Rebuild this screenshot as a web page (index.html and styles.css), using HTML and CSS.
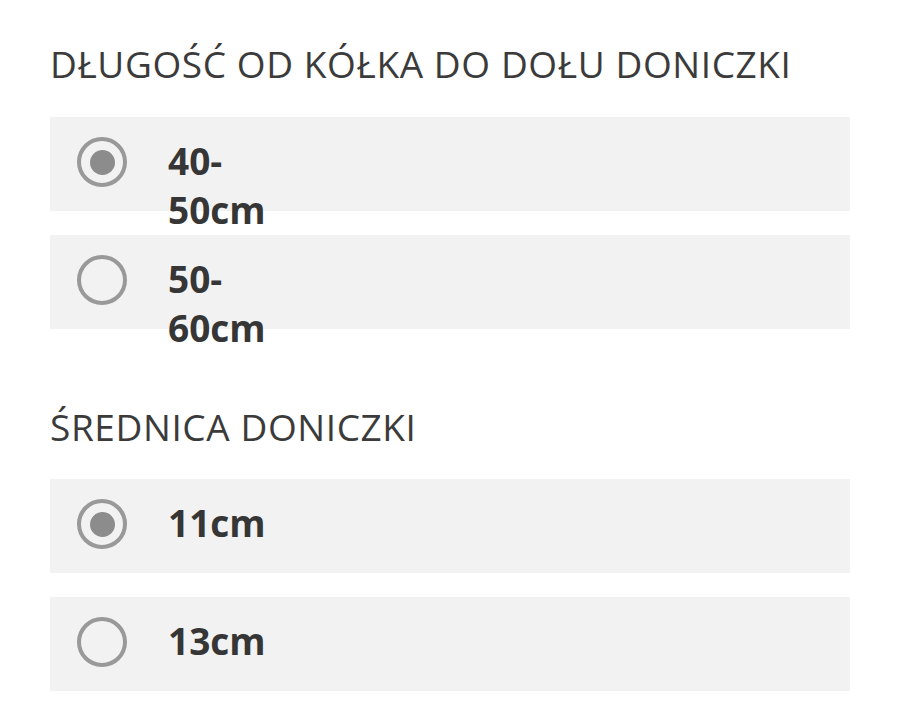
FILE: index.html
```html
<!DOCTYPE html>
<html lang="pl">
<head>
    <meta charset="UTF-8">
    <title>Warianty</title>
    <link rel="stylesheet" href="styles.css">
</head>
<body>
<div class="variants">
    <!-- długość -->
    <div class="variant-group">
        <h2 class="variant-title">DŁUGOŚĆ OD KÓŁKA DO DOŁU DONICZKI</h2>
        <div class="options">
            <label class="option">
                <span class="radio checked"></span>
                <span class="option-name">40-50cm</span>
            </label>
            <label class="option">
                <span class="radio"></span>
                <span class="option-name">50-60cm</span>
            </label>
        </div>
    </div>

    <!-- średnica -->
    <div class="variant-group">
        <h2 class="variant-title">ŚREDNICA DONICZKI</h2>
        <div class="options">
            <label class="option">
                <span class="radio checked"></span>
                <span class="option-name">11cm</span>
            </label>
            <label class="option">
                <span class="radio"></span>
                <span class="option-name">13cm</span>
            </label>
        </div>
    </div>
</div>
</body>
</html>
```

FILE: styles.css
```css
body {
    margin: 0;
    background: #fff;
    font-family: "Open Sans", "Noto Sans", sans-serif;
    color: #333;
}

.variants {
    padding: 39px 50px 0;
}

.variant-group + .variant-group {
    margin-top: 73px;
}

.variant-title {
    margin: 0 0 28px;
    font-size: 37px;
    line-height: 50px;
    letter-spacing: 0.6px;
    font-weight: 400;
    color: #3b3b3b;
}
.variant-group + .variant-group .variant-title {
    margin-bottom: 27px;
}

.options {
    display: flex;
    flex-direction: column;
    gap: 24px;
}

.option {
    display: flex;
    align-items: flex-start;
    gap: 41px;
    height: 94px;
    box-sizing: border-box;
    padding: 20px 0 0 27px;
    background: #f2f2f2;
    cursor: pointer;
}

/* radio */
.radio {
    flex: none;
    position: relative;
    width: 50px;
    height: 50px;
    box-sizing: border-box;
    border: 4px solid #999;
    border-radius: 50%;
}
.radio.checked:after {
    content: "";
    position: absolute;
    left: 8.5px;
    top: 8.5px;
    width: 25px;
    height: 25px;
    border-radius: 50%;
    background: #8c8c8c;
}

.option-name {
    width: 110px;
    margin-top: -1px;
    font-size: 37px;
    line-height: 49px;
    font-weight: 700;
    color: #363636;
}
```
